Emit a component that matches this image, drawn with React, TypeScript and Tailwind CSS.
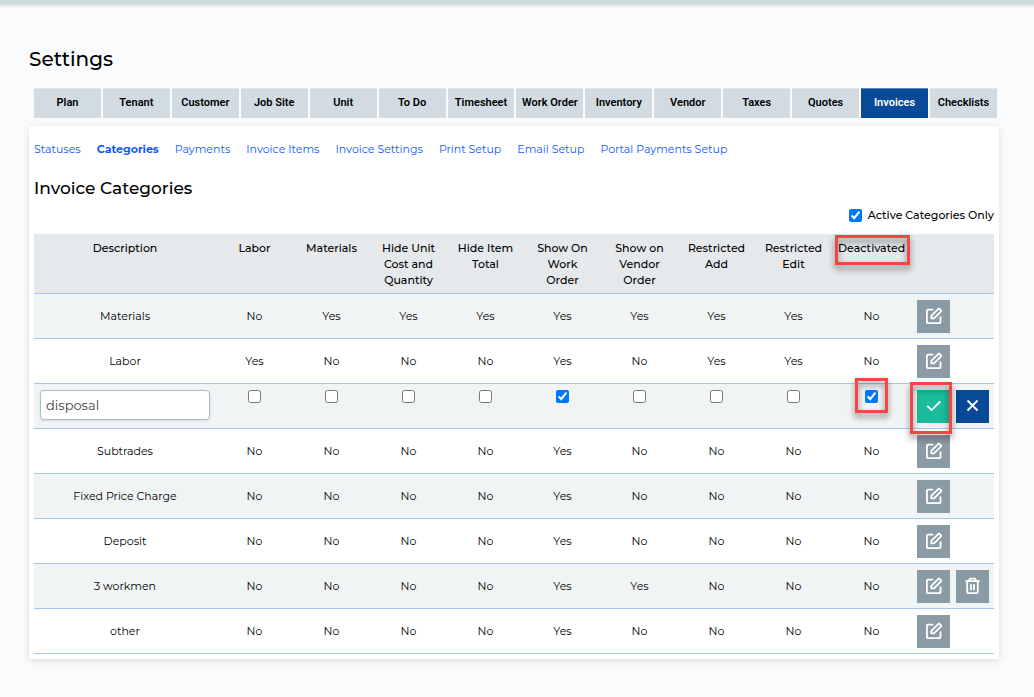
import { useState } from "react";

const FONT = "font-[Montserrat,Inter,sans-serif]";

const tabs = [
  "Plan",
  "Tenant",
  "Customer",
  "Job Site",
  "Unit",
  "To Do",
  "Timesheet",
  "Work Order",
  "Inventory",
  "Vendor",
  "Taxes",
  "Quotes",
  "Invoices",
  "Checklists",
];

const links = [
  "Statuses",
  "Categories",
  "Payments",
  "Invoice Items",
  "Invoice Settings",
  "Print Setup",
  "Email Setup",
  "Portal Payments Setup",
];

const columns = [
  "Labor",
  "Materials",
  "Hide Unit Cost and Quantity",
  "Hide Item Total",
  "Show On Work Order",
  "Show on Vendor Order",
  "Restricted Add",
  "Restricted Edit",
  "Deactivated",
];

interface Category {
  name: string;
  flags: boolean[];
  editing?: boolean;
  removable?: boolean;
}

const Y = true;
const N = false;

const categories: Category[] = [
  { name: "Materials", flags: [N, Y, Y, Y, Y, Y, Y, Y, N] },
  { name: "Labor", flags: [Y, N, N, N, Y, N, Y, Y, N] },
  { name: "disposal", flags: [N, N, N, N, Y, N, N, N, Y], editing: true },
  { name: "Subtrades", flags: [N, N, N, N, Y, N, N, N, N] },
  { name: "Fixed Price Charge", flags: [N, N, N, N, Y, N, N, N, N] },
  { name: "Deposit", flags: [N, N, N, N, Y, N, N, N, N] },
  { name: "3 workmen", flags: [N, N, N, N, Y, Y, N, N, N], removable: true },
  { name: "other", flags: [N, N, N, N, Y, N, N, N, N] },
];

function EditIcon() {
  return (
    <svg viewBox="0 0 18 18" className="h-[18px] w-[18px]" fill="none" stroke="currentColor" strokeWidth="1.8" strokeLinejoin="round" strokeLinecap="round">
      <path d="M7.6 2.6H3.2Q1.9 2.6 1.9 3.9V14.9Q1.9 16.2 3.2 16.2H14.2Q15.5 16.2 15.5 14.9V10.2" />
      <path d="M6.3 11.4V8.9L13.4 1.8Q13.9 1.3 14.4 1.8L16 3.4Q16.5 3.9 16 4.4L9 11.4Z" />
    </svg>
  );
}

function TrashIcon() {
  return (
    <svg viewBox="0 0 18 18" className="h-[18px] w-[18px]" fill="none" stroke="currentColor" strokeWidth="1.8" strokeLinejoin="round" strokeLinecap="round">
      <path d="M2 4.2H15M5.3 4V3Q5.3 1.7 6.6 1.7H10.4Q11.7 1.7 11.7 3V4" />
      <path d="M3.2 4.2V14.6Q3.2 16.2 4.8 16.2H12.2Q13.8 16.2 13.8 14.6V4.2" />
      <path d="M7 8V12.6M10 8V12.6" />
    </svg>
  );
}

function CheckIcon() {
  return (
    <svg viewBox="0 0 18 18" className="h-[18px] w-[18px]" fill="none" stroke="currentColor" strokeWidth="1.8">
      <path d="M2.3 8.9L6.6 13.1L15.4 4.3" />
    </svg>
  );
}

function CloseIcon() {
  return (
    <svg viewBox="0 0 18 18" className="h-[18px] w-[18px]" fill="none" stroke="currentColor" strokeWidth="1.8">
      <path d="M3.5 3.5L13.5 13.5M13.5 3.5L3.5 13.5" />
    </svg>
  );
}

const iconButton =
  "flex h-[33px] w-[33px] shrink-0 items-center justify-center pb-0.5 text-white";
const callout =
  "pointer-events-none absolute z-10 border-3 border-[#fa4343] drop-shadow-[0_4px_3px_rgba(0,0,0,0.5)]";

function CategoryRow({ category }: { category: Category }) {
  const [name, setName] = useState(category.name);
  const [flags, setFlags] = useState(category.flags);

  const toggle = (index: number) =>
    setFlags(flags.map((flag, i) => (i === index ? !flag : flag)));

  const editCell = "border-b border-[#a6c8f0] px-1.5 pt-1.5 pb-[5px]";
  const textCell = "border-b border-[#a6c8f0] px-1.5 pt-1 pb-[5px]";
  const actionCell = "border-b border-[#a6c8f0] pt-1.5 pb-[5px] pl-1.5";

  if (category.editing) {
    return (
      <tr className="bg-[#f0f4f5] align-top">
        <td className={editCell}>
          <input
            type="text"
            aria-label="Description"
            value={name}
            onChange={(e) => setName(e.target.value)}
            className="block h-[30px] w-full rounded border border-[#a9bfc9] bg-white px-[5px] text-[13px] text-[#444] shadow-sm"
          />
        </td>
        {flags.map((flag, i) => (
          <td key={columns[i]} className={editCell}>
            <div className="relative mx-auto w-[13px]">
              <input
                type="checkbox"
                aria-label={columns[i]}
                checked={flag}
                onChange={() => toggle(i)}
                className="block h-[13px] w-[13px]"
              />
              {columns[i] === "Deactivated" && (
                <span className={`${callout} -top-3 -left-2.5 h-[35px] w-[33px]`} />
              )}
            </div>
          </td>
        ))}
        <td className={actionCell}>
          <div className="flex gap-1.5">
            <div className="relative">
              <button aria-label="Save" className={`${iconButton} bg-[#1bbc9b]`}>
                <CheckIcon />
              </button>
              <span className={`${callout} -top-2 -left-[7px] h-[52px] w-[42px]`} />
            </div>
            <button aria-label="Cancel" className={`${iconButton} bg-[#084a98]`}>
              <CloseIcon />
            </button>
          </div>
        </td>
      </tr>
    );
  }

  return (
    <tr className="odd:bg-[#f0f4f5]">
      <td className={textCell}>{name}</td>
      {flags.map((flag, i) => (
        <td key={columns[i]} className={textCell}>
          {flag ? "Yes" : "No"}
        </td>
      ))}
      <td className={actionCell}>
        <div className="flex gap-1.5">
          <button aria-label="Edit" className={`${iconButton} bg-[#8a9ba5]`}>
            <EditIcon />
          </button>
          {category.removable && (
            <button aria-label="Delete" className={`${iconButton} bg-[#8a9ba5]`}>
              <TrashIcon />
            </button>
          )}
        </div>
      </td>
    </tr>
  );
}

export default function App() {
  const [activeOnly, setActiveOnly] = useState(true);

  return (
    <div className={`min-h-screen bg-[#fafbfd] text-black ${FONT}`}>
      <div className="h-2 bg-linear-to-b from-[#d0dade] from-40% to-[#fafbfd]" />

      <main className="pt-9 pr-[35px] pb-9 pl-[29px]">
        <h1 className="text-xl leading-[30px] font-medium">Settings</h1>

        {/* Settings tabs */}
        <nav className="mt-3.5 mr-0.5 ml-[5px] flex gap-0.5 font-[Roboto,sans-serif] text-[11px] font-semibold">
          {tabs.map((tab) => (
            <button
              key={tab}
              className={`h-[30px] min-w-0 flex-1 border-t whitespace-nowrap ${
                tab === "Invoices"
                  ? "border-[#5f88b9] bg-[#084a98] text-white"
                  : "border-[#e4e9ed] bg-[#d3dbe2]"
              }`}
            >
              {tab}
            </button>
          ))}
        </nav>

        <section className="mt-2 bg-white px-[5px] pt-4 pb-[5px] shadow-[0_2px_8px_rgba(0,0,0,0.12)]">
          <nav className="flex flex-wrap gap-x-4 text-[11px] leading-[14px] text-[#1558ff]">
            {links.map((link) => (
              <a key={link} href="#" className={link === "Categories" ? "font-bold" : ""}>
                {link}
              </a>
            ))}
          </nav>

          <h2 className="mt-5 text-[17px] leading-6 font-medium">Invoice Categories</h2>

          <div className="mt-1.5 flex justify-end">
            <label className="flex items-center gap-1.5 text-[11px] leading-[18px] font-medium">
              <input
                type="checkbox"
                checked={activeOnly}
                onChange={() => setActiveOnly(!activeOnly)}
                className="h-[13px] w-[13px]"
              />
              Active Categories Only
            </label>
          </div>

          <table className="mt-2.5 w-full table-fixed border-separate border-spacing-0 text-center text-[11px] leading-4">
            <colgroup>
              <col />
              {columns.map((column) => (
                <col key={column} className={column === "Deactivated" ? "w-[79px]" : "w-[77px]"} />
              ))}
              <col className="w-[83px]" />
            </colgroup>
            <thead>
              <tr className="bg-[#e5e9ec] align-top">
                <th className="border-b border-[#a6c8f0] pt-1.5 pb-[5px] font-medium">Description</th>
                {columns.map((column) => (
                  <th
                    key={column}
                    className="relative border-b border-[#a6c8f0] px-1.5 pt-1.5 pb-[5px] font-medium"
                  >
                    {column}
                    {column === "Deactivated" && (
                      <span className={`${callout} top-px left-[3px] h-[30px] w-[75px]`} />
                    )}
                  </th>
                ))}
                <th className="border-b border-[#a6c8f0]" />
              </tr>
            </thead>
            <tbody>
              {categories.map((category) => (
                <CategoryRow key={category.name} category={category} />
              ))}
            </tbody>
          </table>
        </section>
      </main>
    </div>
  );
}
